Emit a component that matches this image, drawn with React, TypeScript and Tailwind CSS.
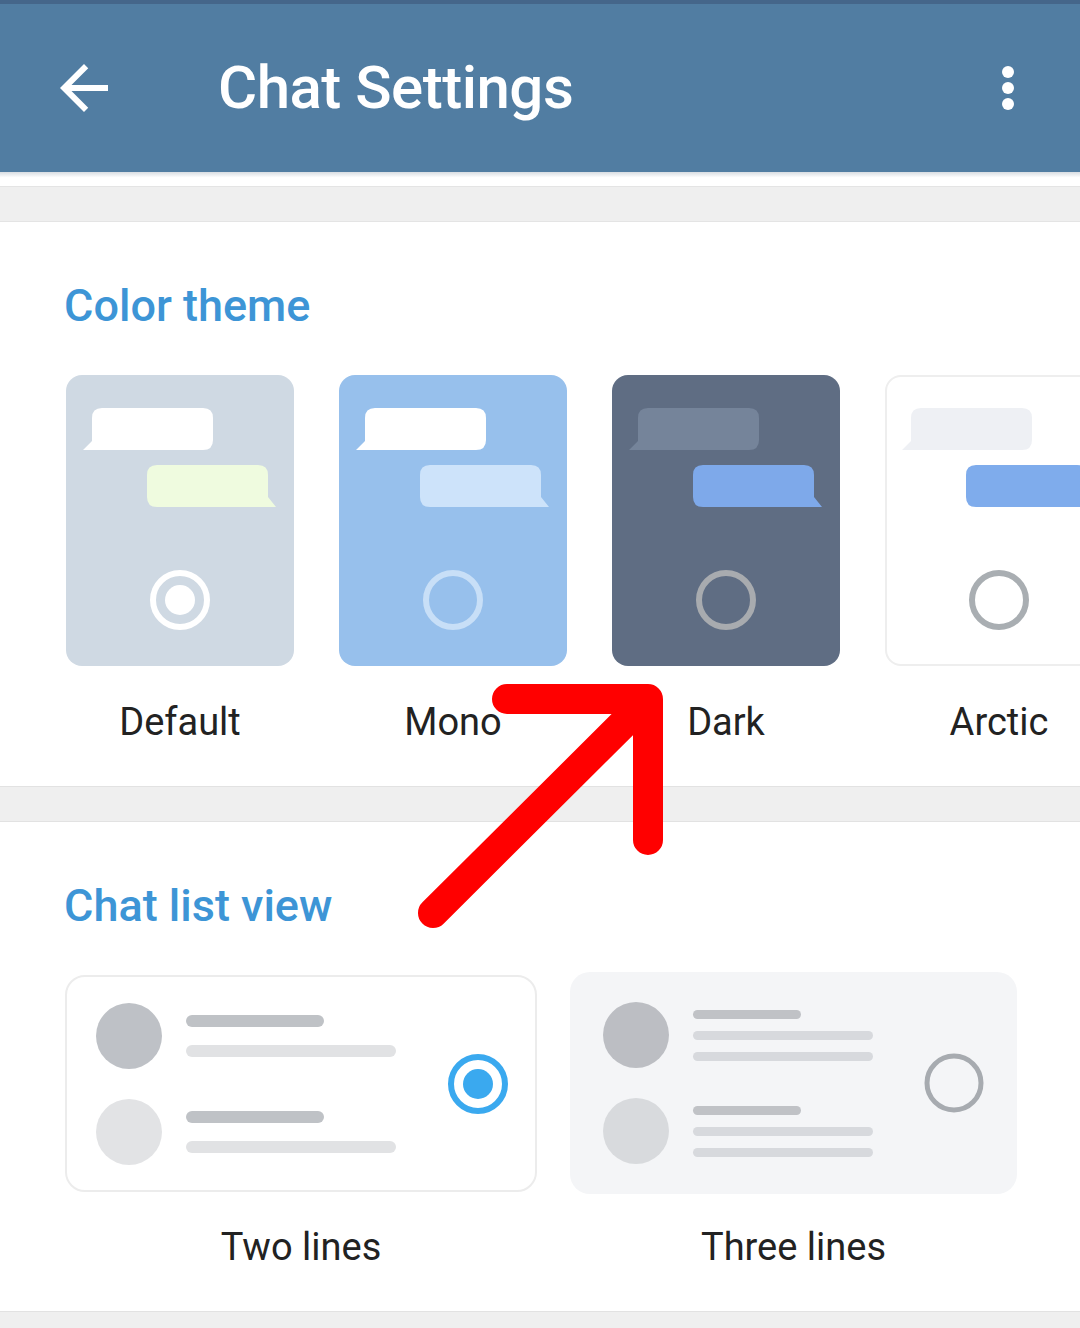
import React from "react";

type Theme = {
  name: string;
  bg: string;
  border?: string;
  b1: string;
  b2: string;
  ring: string;
  dot?: string;
};

const themes: Theme[] = [
  { name: "Default", bg: "bg-[#cfd9e3]", b1: "#ffffff", b2: "#effbdf", ring: "#ffffff", dot: "#ffffff" },
  { name: "Mono", bg: "bg-[#97c0ec]", b1: "#ffffff", b2: "#cde3fa", ring: "#c8dff7" },
  { name: "Dark", bg: "bg-[#5f6d83]", b1: "#75849a", b2: "#7ea9ea", ring: "#a8abaf" },
  { name: "Arctic", bg: "bg-white", border: "border-2 border-[#eeeeee]", b1: "#eef0f4", b2: "#7facec", ring: "#a9aeb2" },
];

function ThemePreview({ t }: { t: Theme }) {
  return (
    <div className="flex flex-col items-center shrink-0 w-[228px]">
      <div className={`w-[228px] h-[291px] rounded-[16px] ${t.bg} ${t.border ?? ""}`}>
        <svg width="228" height="291" viewBox="0 0 228 291" className={t.border ? "-m-[2px]" : ""}>
          <path d="M36 33 H137 Q147 33 147 43 V65 Q147 75 137 75 H17 L26 66 V43 Q26 33 36 33 Z" fill={t.b1} />
          <path d="M91 90 H192 Q202 90 202 100 V122 L210 132 H91 Q81 132 81 122 V100 Q81 90 91 90 Z" fill={t.b2} />
          <circle cx="114" cy="225" r="27" fill="none" stroke={t.ring} strokeWidth="6" />
          {t.dot && <circle cx="114" cy="225" r="15" fill={t.dot} />}
        </svg>
      </div>
      <div className="mt-[34px] text-[38px] leading-[44px] text-[#222222]">{t.name}</div>
    </div>
  );
}

function Radio({ checked }: { checked?: boolean }) {
  return (
    <svg width="64" height="64" viewBox="0 0 64 64">
      <circle cx="32" cy="32" r="27" fill="none" stroke={checked ? "#3aa9ef" : "#a7abb0"} strokeWidth={checked ? 6 : 5} />
      {checked && <circle cx="32" cy="32" r="15" fill="#3aa9ef" />}
    </svg>
  );
}

export default function App() {
  return (
    <div
      className="relative w-[1080px] h-[1328px] overflow-hidden bg-[#efefef]"
      style={{ fontFamily: "Roboto, 'Noto Sans', sans-serif" }}
    >
      <div className="h-[4px] bg-[#45668a]" />
      <header className="h-[168px] bg-[#517da2] flex items-center relative">
        <svg width="72" height="72" viewBox="0 0 24 24" className="ml-[48px]" fill="white">
          <path d="M20 11H7.83l5.59-5.59L12 4l-8 8 8 8 1.41-1.41L7.83 13H20v-2z" />
        </svg>
        <h1 className="ml-[98px] text-[60px] font-medium text-white leading-none tracking-[-0.5px]">
          Chat Settings
        </h1>
        <svg width="20" height="50" viewBox="0 0 20 50" className="ml-auto mr-[62px]" fill="white">
          <circle cx="10" cy="9" r="6" />
          <circle cx="10" cy="25" r="6" />
          <circle cx="10" cy="41" r="6" />
        </svg>
      </header>
      <div className="h-[14px] bg-white bg-gradient-to-b from-[#d8dde2] to-white to-[40%]" />
      <div className="h-[36px] border-t border-[#e4e4e4] border-b" />

      <section className="bg-white h-[564px] pt-[54px] overflow-hidden">
        <h2 className="pl-[64px] text-[45px] font-medium text-[#3d95d6] leading-[60px]">Color theme</h2>
        <div className="mt-[39px] pl-[66px] flex gap-[45px]">
          {themes.map((t) => (
            <ThemePreview key={t.name} t={t} />
          ))}
        </div>
      </section>
      <div className="h-[36px] border-t border-b border-[#e2e2e2]" />

      <section className="bg-white h-[489px] pt-[54px]">
        <h2 className="pl-[64px] text-[45px] font-medium text-[#3d95d6] leading-[60px]">Chat list view</h2>
        <div className="mt-[39px] pl-[65px] flex gap-[33px] items-start">
          <div className="flex flex-col items-center">
            <div className="w-[472px] h-[217px] rounded-[20px] border-2 border-[#ececec] bg-white flex items-center pl-[29px] pr-[25px]">
              <div className="flex flex-col gap-[30px]">
                <div className="flex items-center gap-[24px]">
                  <div className="w-[66px] h-[66px] rounded-full bg-[#bec1c6]" />
                  <div className="flex flex-col gap-[18px]">
                    <div className="w-[138px] h-[12px] rounded-full bg-[#bfc2c6]" />
                    <div className="w-[210px] h-[12px] rounded-full bg-[#e1e2e4]" />
                  </div>
                </div>
                <div className="flex items-center gap-[24px]">
                  <div className="w-[66px] h-[66px] rounded-full bg-[#e2e3e5]" />
                  <div className="flex flex-col gap-[18px]">
                    <div className="w-[138px] h-[12px] rounded-full bg-[#bfc2c6]" />
                    <div className="w-[210px] h-[12px] rounded-full bg-[#e1e2e4]" />
                  </div>
                </div>
              </div>
              <div className="ml-auto">
                <Radio checked />
              </div>
            </div>
            <div className="mt-[33px] text-[38px] leading-[44px] text-[#222222]">Two lines</div>
          </div>
          <div className="flex flex-col items-center -mt-[3px]">
            <div className="w-[447px] h-[222px] rounded-[20px] bg-[#f4f5f7] flex items-center pl-[33px] pr-[31px]">
              <div className="flex flex-col gap-[30px]">
                <div className="flex items-center gap-[24px]">
                  <div className="w-[66px] h-[66px] rounded-full bg-[#bcbec3]" />
                  <div className="flex flex-col gap-[12px]">
                    <div className="w-[108px] h-[9px] rounded-full bg-[#c0c2c6]" />
                    <div className="w-[180px] h-[9px] rounded-full bg-[#d7d9dd]" />
                    <div className="w-[180px] h-[9px] rounded-full bg-[#d7d9dd]" />
                  </div>
                </div>
                <div className="flex items-center gap-[24px]">
                  <div className="w-[66px] h-[66px] rounded-full bg-[#d8dadd]" />
                  <div className="flex flex-col gap-[12px]">
                    <div className="w-[108px] h-[9px] rounded-full bg-[#c0c2c6]" />
                    <div className="w-[180px] h-[9px] rounded-full bg-[#d7d9dd]" />
                    <div className="w-[180px] h-[9px] rounded-full bg-[#d7d9dd]" />
                  </div>
                </div>
              </div>
              <div className="ml-auto">
                <Radio />
              </div>
            </div>
            <div className="mt-[31px] text-[38px] leading-[44px] text-[#222222]">Three lines</div>
          </div>
        </div>
      </section>
      <div className="h-[17px] border-t border-[#e2e2e2]" />

      <svg
        className="absolute left-0 top-0 pointer-events-none"
        width="1080"
        height="1328"
        viewBox="0 0 1080 1328"
      >
        <path
          d="M433 913 L638 709 M507 699 H648 V840"
          fill="none"
          stroke="#ff0000"
          strokeWidth="30"
          strokeLinecap="round"
          strokeLinejoin="round"
        />
      </svg>
    </div>
  );
}
